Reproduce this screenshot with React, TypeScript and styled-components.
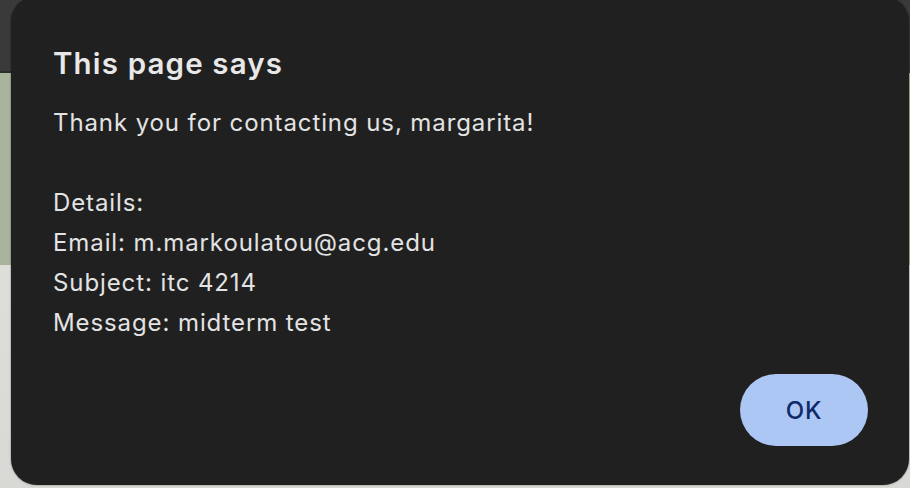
import React from "react";
import styled, { createGlobalStyle } from "styled-components";

const Global = createGlobalStyle`
  html, body { margin: 0; padding: 0; }
  body { width: 910px; height: 488px; overflow: hidden; font-family: Inter, "Noto Sans", sans-serif; }
`;

const Page = styled.div`
  position: relative;
  width: 910px;
  height: 488px;
  display: grid;
  grid-template-rows: 71px 2px 192px 1fr;
  background: #dcdcd8;
`;

const TopBar = styled.div`
  background: #3a3a3a;
`;

const TopRule = styled.div`
  background: #2c2c2c;
`;

const Banner = styled.div`
  background: #a9b49c;
`;

const Content = styled.div`
  background: linear-gradient(#dedfdb, #d8d8d4);
`;

const Dialog = styled.div`
  position: absolute;
  left: 11px;
  top: -4px;
  width: 898px;
  height: 489px;
  box-sizing: border-box;
  background: #202020;
  border-radius: 26px;
  padding: 48px 41px 0 42px;
  display: flex;
  flex-direction: column;
  color: #e3e3e3;
  box-shadow: 0 0 2px rgba(0, 0, 0, 0.5);
`;

const Title = styled.h1`
  margin: 0;
  font-size: 29.5px;
  font-weight: 600;
  line-height: 38px;
  color: #e8e8e8;
  letter-spacing: 1.15px;
`;

const Message = styled.div`
  margin-top: 21px;
  font-size: 24px;
  line-height: 40px;
  font-weight: 400;
  letter-spacing: 0.9px;
  white-space: pre-line;
`;

const Actions = styled.div`
  display: flex;
  justify-content: flex-end;
  margin-top: 31px;
`;

const OkButton = styled.button`
  width: 128px;
  height: 72px;
  border: none;
  border-radius: 36px;
  background: #adc7f4;
  color: #10296b;
  font-family: Inter, "Noto Sans", sans-serif;
  font-size: 24px;
  font-weight: 500;
  letter-spacing: 0.8px;
  cursor: pointer;
`;

export default function App() {
  const lines = [
    "Thank you for contacting us, margarita!",
    "",
    "Details:",
    "Email: m.markoulatou@acg.edu",
    "Subject: itc 4214",
    "Message: midterm test",
  ];
  return (
    <>
      <Global />
      <Page>
        <TopBar />
        <TopRule />
        <Banner />
        <Content />
        <Dialog>
          <Title>This page says</Title>
          <Message>{lines.join("\n")}</Message>
          <Actions>
            <OkButton>OK</OkButton>
          </Actions>
        </Dialog>
      </Page>
    </>
  );
}
